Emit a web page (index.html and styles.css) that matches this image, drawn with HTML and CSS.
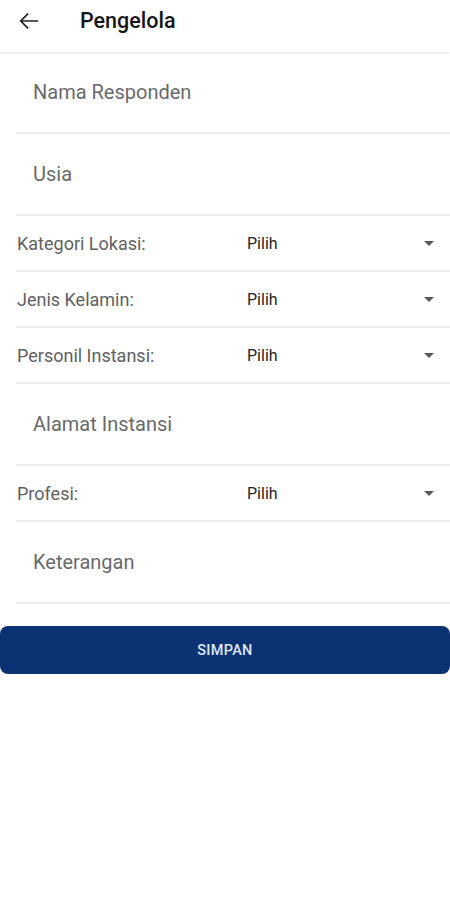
FILE: index.html
```html
<!DOCTYPE html>
<html lang="id">
<head>
    <meta charset="UTF-8">
    <meta name="viewport" content="width=device-width, initial-scale=1.0">
    <title>Pengelola</title>
    <link rel="stylesheet" href="styles.css">
</head>
<body>
    <div class="app-bar">
        <svg class="back" viewBox="0 0 24 24" width="22" height="22">
            <path d="M22 12H3M11 4l-8 8 8 8" fill="none" stroke="#222" stroke-width="1.9"/>
        </svg>
        <span class="title">Pengelola</span>
    </div>

    <div class="form">
        <div class="field"><span class="hint">Nama Responden</span></div>
        <div class="field"><span class="hint">Usia</span></div>
        <div class="select-row">
            <span class="label">Kategori Lokasi:</span>
            <span class="value">Pilih</span>
            <span class="caret"></span>
        </div>
        <div class="select-row">
            <span class="label">Jenis Kelamin:</span>
            <span class="value">Pilih</span>
            <span class="caret"></span>
        </div>
        <div class="select-row">
            <span class="label">Personil Instansi:</span>
            <span class="value">Pilih</span>
            <span class="caret"></span>
        </div>
        <div class="field"><span class="hint">Alamat Instansi</span></div>
        <div class="select-row">
            <span class="label">Profesi:</span>
            <span class="value">Pilih</span>
            <span class="caret"></span>
        </div>
        <div class="field"><span class="hint">Keterangan</span></div>
    </div>

    <button class="save">SIMPAN</button>
</body>
</html>
```

FILE: styles.css
```css
body {
    margin: 0;
    background-color: #fff;
    font-family: Roboto, 'Noto Sans', sans-serif;
}
.app-bar {
    height: 52px;
    display: flex;
    align-items: center;
    box-shadow: 0 1px 3px rgba(0, 0, 0, 0.12);
    position: relative;
}
.back {
    margin-left: 18px;
    margin-top: -10px;
}
.title {
    margin-left: 40px;
    margin-top: -12px;
    font-size: 21.5px;
    font-weight: 500;
    color: #161616;
}
.form {
    margin-left: 16px;
}
.field {
    height: 80px;
    display: flex;
    align-items: center;
    border-bottom: 2px solid #eeeeee;
    padding-left: 17px;
}
.hint {
    font-size: 20px;
    color: #6a6a6a;
}
.select-row {
    height: 54px;
    display: flex;
    align-items: center;
    border-bottom: 2px solid #eeeeee;
    padding-left: 1px;
}
.label {
    width: 230px;
    font-size: 18px;
    color: #616161;
}
.value {
    flex: 1;
    font-size: 16px;
    color: #262626;
}
.caret {
    width: 0;
    height: 0;
    border-left: 5px solid transparent;
    border-right: 5px solid transparent;
    border-top: 5px solid #5a5a5a;
    margin-right: 16px;
}
.save {
    display: block;
    width: 100%;
    height: 48px;
    margin-top: 22px;
    border: none;
    border-radius: 8px;
    background-color: #0b3374;
    color: #dfe7f5;
    font-family: Roboto, sans-serif;
    font-size: 14.5px;
    font-weight: 500;
    letter-spacing: 0.3px;
}
```
